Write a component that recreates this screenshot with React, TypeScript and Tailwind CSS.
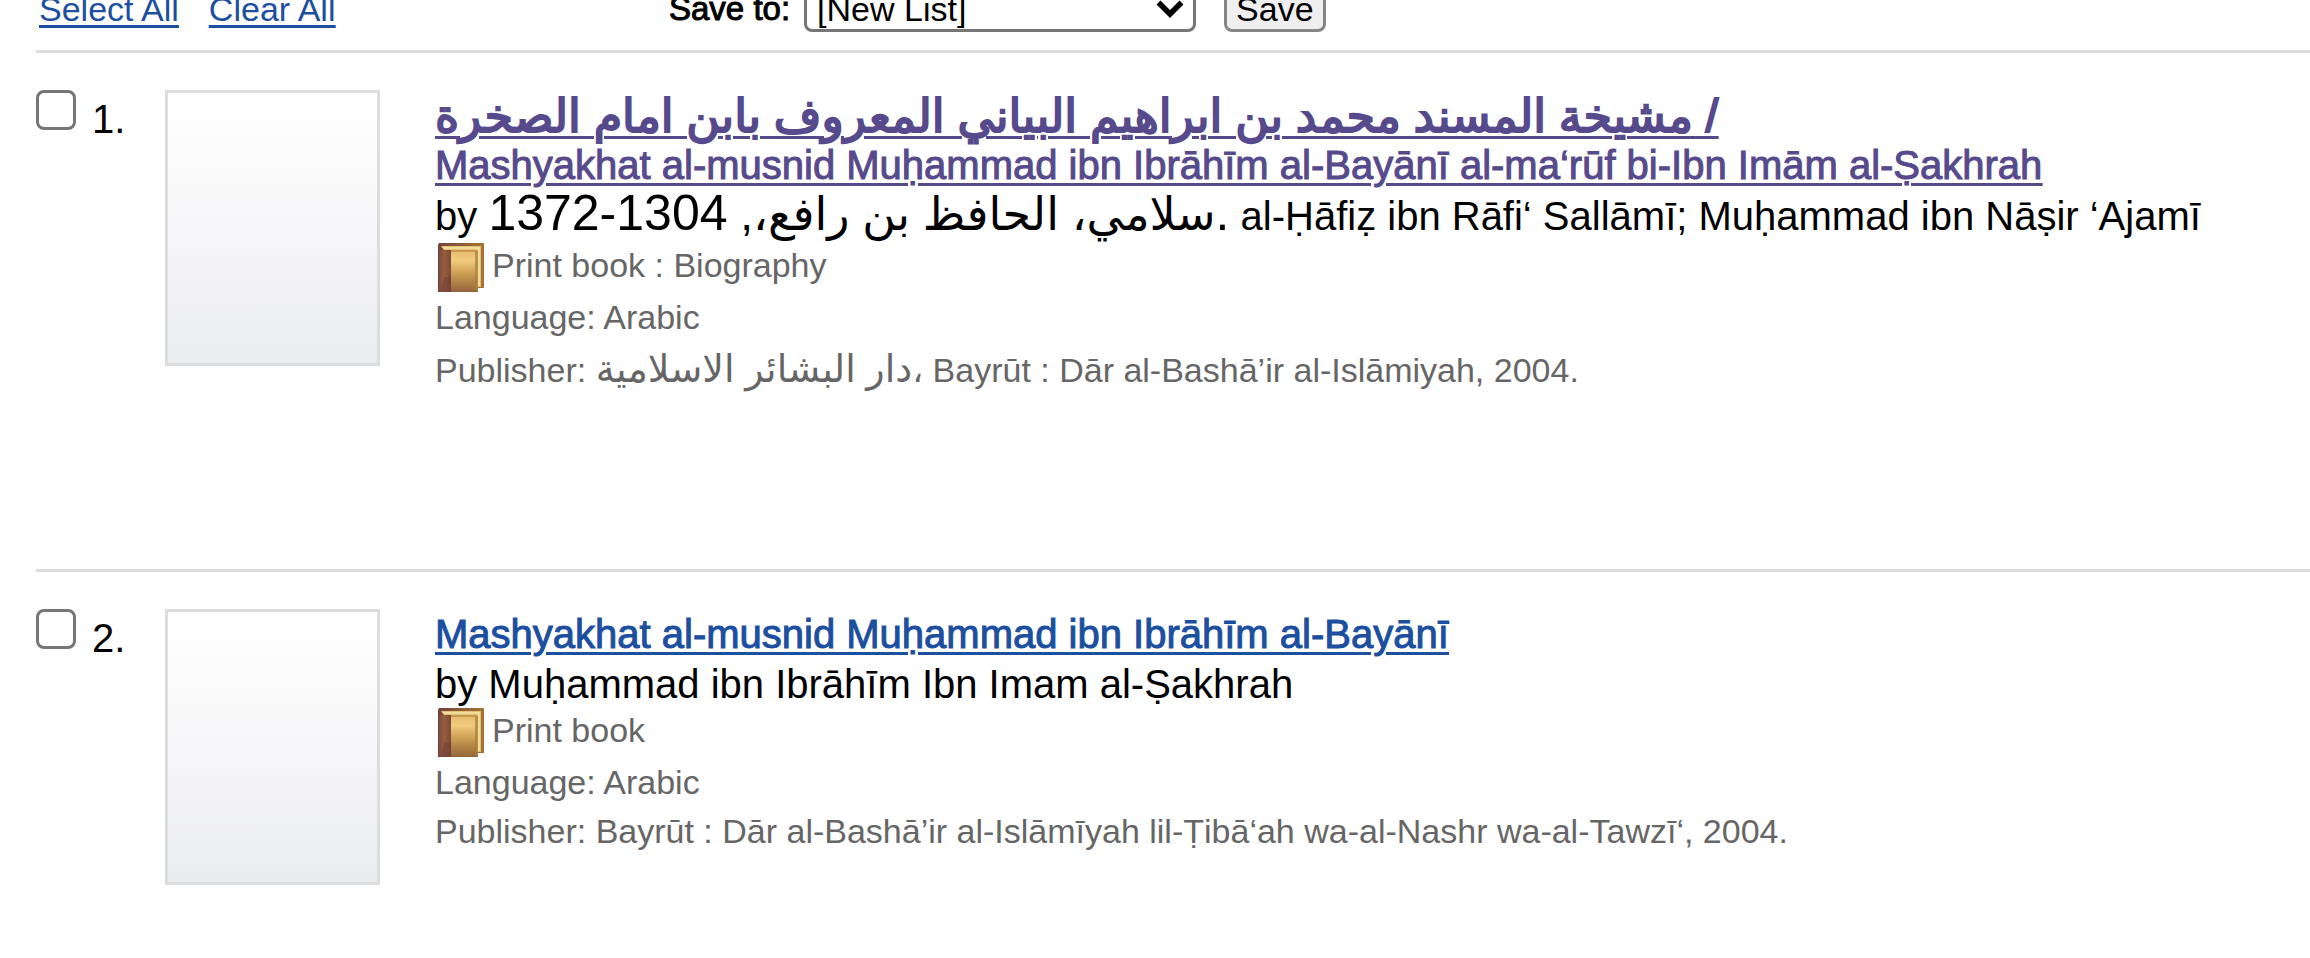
import type { ReactNode } from "react";

function Arabic({ children, className = "" }: { children: ReactNode; className?: string }) {
  return (
    <span lang="ar" className={`leading-0 font-['Liberation_Sans','DejaVu_Sans',sans-serif] ${className}`}>
      {children}
    </span>
  );
}

function BookIcon({ id }: { id: string }) {
  return (
    <svg viewBox="0 0 46 49" className="h-[49px] w-[46px] shrink-0" aria-hidden="true">
      <defs>
        <linearGradient id={`${id}-cover`} x1="0" y1="0" x2="0" y2="1">
          <stop offset="0" stopColor="#e6bb6c" />
          <stop offset="0.25" stopColor="#f1cb7c" />
          <stop offset="0.6" stopColor="#c7984f" />
          <stop offset="1" stopColor="#94643a" />
        </linearGradient>
        <linearGradient id={`${id}-spine`} x1="0" y1="0" x2="1" y2="0">
          <stop offset="0" stopColor="#7a4a44" />
          <stop offset="0.45" stopColor="#96603a" />
          <stop offset="1" stopColor="#7a4839" />
        </linearGradient>
        <linearGradient id={`${id}-edge`} x1="0" y1="0" x2="1" y2="0">
          <stop offset="0" stopColor="#74413b" />
          <stop offset="0.4" stopColor="#8a5638" />
          <stop offset="1" stopColor="#a87334" />
        </linearGradient>
      </defs>
      <path d="M1 0H46V45H40V49H0V2Z" fill={`url(#${id}-edge)`} />
      <path d="M3 3H43V44H39V7H6Z" fill="#dfc274" />
      <path d="M4 4H42V6H6Z" fill="#f3dd9a" />
      <path d="M40 6H42V43H40Z" fill="#f0dc94" />
      <path d="M1 7H13V49H1Z" fill={`url(#${id}-spine)`} />
      <path d="M6 34H13V49H3Z" fill="#733f3a" opacity="0.6" />
      <path d="M13 7H39V49H13Z" fill={`url(#${id}-cover)`} />
      <path d="M13 7H39V9H13Z" fill="#b98742" opacity="0.7" />
      <path d="M37 8H40V48H37Z" fill="#a97a3c" opacity="0.7" />
    </svg>
  );
}

type Item = {
  id: number;
  titles: ReactNode;
  by: ReactNode;
  format: string;
  publisher: ReactNode;
};

const items: Item[] = [
  {
    id: 1,
    titles: (
      <a href="#item-1" className="text-[#574a8c]">
        <span className="block pt-[3px] leading-[51px]">
          <Arabic className="text-[46px] [-webkit-text-stroke:2px]">
            مشيخة المسند محمد بن ابراهيم البياني المعروف بابن امام الصخرة /
          </Arabic>
        </span>
        <span className="block pb-[3px] leading-[43px]">
          Mashyakhat al-musnid Muḥammad ibn Ibrāhīm al-Bayānī al-ma‘rūf bi-Ibn Imām al-Ṣakhrah
        </span>
      </a>
    ),
    by: (
      <p className="leading-[53px]">
        by{" "}
        <Arabic className="text-[46px]">
          سلامي، الحافظ بن رافع،, <span className="text-[50px]">1304-1372.</span>
        </Arabic>{" "}
        al-Ḥāfiẓ ibn Rāfi‘ Sallāmī; Muḥammad ibn Nāṣir ‘Ajamī
      </p>
    ),
    format: "Print book : Biography",
    publisher: (
      <p className="leading-[58px]">
        Publisher: <Arabic className="text-[38px]">دار البشائر الاسلامية</Arabic>، Bayrūt : Dār al-Bashā’ir
        al-Islāmiyah, 2004.
      </p>
    ),
  },
  {
    id: 2,
    titles: (
      <a href="#item-2" className="text-[#1c4f9f]">
        <span className="block leading-[51px]">Mashyakhat al-musnid Muḥammad ibn Ibrāhīm al-Bayānī</span>
      </a>
    ),
    by: <p className="leading-[48px]">by Muḥammad ibn Ibrāhīm Ibn Imam al-Ṣakhrah</p>,
    format: "Print book",
    publisher: (
      <p className="leading-[50px]">
        Publisher: Bayrūt : Dār al-Bashā’ir al-Islāmīyah lil-Ṭibā‘ah wa-al-Nashr wa-al-Tawzī‘, 2004.
      </p>
    ),
  },
];

function ResultRow({ item }: { item: Item }) {
  return (
    <li className="flex min-h-[519px] items-start border-t-3 border-[#dcdcdc] pt-[37px] last:min-h-0">
      <label className="flex w-[129px] shrink-0 items-start text-[40px] leading-[58px]">
        <input
          type="checkbox"
          className="mr-4 size-10 shrink-0 appearance-none rounded-lg border-3 border-[#767676] bg-white checked:bg-[#1c4f9f]"
        />
        {item.id}.
      </label>
      <div className="mr-[55px] h-[276px] w-[215px] shrink-0 border-3 border-[#dcdddf] bg-linear-to-b from-white via-[#f7f7f9] to-[#ebecee]" />
      <div className="min-w-0 flex-1 text-[40px]">
        <h2 className="underline decoration-3 underline-offset-4 [-webkit-text-stroke:1px]">{item.titles}</h2>
        {item.by}
        <div className="text-[34px] text-[#666666]">
          <div className="flex h-[50px] items-start gap-2 pl-[3px] leading-[45px]">
            <BookIcon id={`book-${item.id}`} />
            <span>{item.format}</span>
          </div>
          <p className="leading-[48px]">Language: Arabic</p>
          {item.publisher}
        </div>
      </div>
    </li>
  );
}

export default function App() {
  return (
    <main className="overflow-x-hidden bg-white pl-9 font-['Liberation_Sans','DejaVu_Sans',sans-serif] text-black">
      <div className="-mt-[14px] flex h-16 items-start text-[34px] leading-[46px]">
        <div className="flex w-[633px] shrink-0 gap-[30px] pl-[3px] text-[#1c4f9f] underline decoration-3 underline-offset-4">
          <a href="#select-all">Select All</a>
          <a href="#clear-all">Clear All</a>
        </div>
        <label htmlFor="list" className="mr-3.5 text-[33px] [-webkit-text-stroke:1px]">
          Save to:
        </label>
        <div className="relative mr-7">
          <select
            id="list"
            className="block h-[46px] w-[392px] appearance-none rounded-lg border-3 border-[#767676] bg-white pl-[10px] text-[34px] leading-10"
          >
            <option>[New List]</option>
          </select>
          <svg viewBox="0 0 28 20" className="pointer-events-none absolute top-[13px] right-3 h-5 w-7" aria-hidden="true">
            <path d="M2.500 3.500L14 15L25.500 3.500" fill="none" stroke="#000" strokeWidth="5.500" />
          </svg>
        </div>
        <button
          type="button"
          className="h-[46px] rounded-lg border-3 border-[#858585] bg-[#efefef] px-[9px] text-[34px] leading-10"
        >
          Save
        </button>
      </div>
      <ol>
        {items.map((item) => (
          <ResultRow key={item.id} item={item} />
        ))}
      </ol>
    </main>
  );
}
